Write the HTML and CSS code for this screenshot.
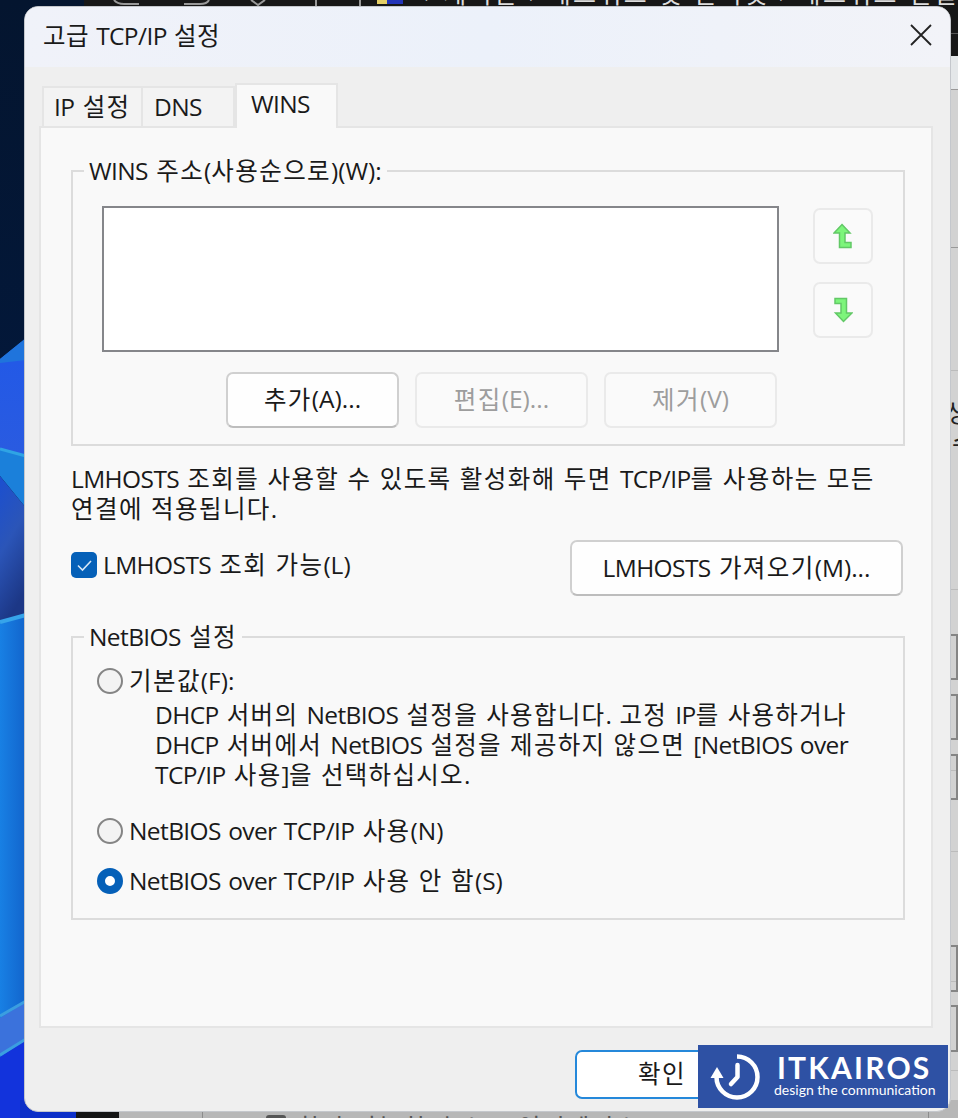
FILE: index.html
```html
<!DOCTYPE html>
<html lang="ko">
<head>
  <meta charset="UTF-8" />
  <meta name="viewport" content="width=device-width, initial-scale=1.0"/>
  <title>고급 TCP/IP 설정</title>
  <link rel="stylesheet" href="styles.css">
</head>
<body>

  <!-- wallpaper and the window behind -->
  <svg class="desktop" viewBox="0 0 958 1118" aria-hidden="true">
    <defs>
      <linearGradient id="night" x1="0" y1="0" x2="0" y2="1"><stop offset="0" stop-color="#04152f"/><stop offset="0.6" stop-color="#021a42"/><stop offset="1" stop-color="#032049"/></linearGradient>
      <linearGradient id="petal1" x1="0" y1="0" x2="0" y2="1"><stop offset="0" stop-color="#2277e0"/><stop offset="0.2" stop-color="#2359e6"/><stop offset="1" stop-color="#2a5be0"/></linearGradient>
      <linearGradient id="petal2" x1="0" y1="0" x2="0.3" y2="1"><stop offset="0" stop-color="#1b4fd0"/><stop offset="0.5" stop-color="#2b55b8"/><stop offset="1" stop-color="#1c3786"/></linearGradient>
      <linearGradient id="petal3" x1="0" y1="0" x2="1" y2="0"><stop offset="0" stop-color="#1880e4"/><stop offset="1" stop-color="#1264cc"/></linearGradient>
    </defs>
    <rect width="958" height="1118" fill="url(#night)"/>
    <path d="M0 359L26 338V460H0z" fill="url(#petal1)"/>
    <path d="M0 359L26 338V360L0 363z" fill="#1f74dc"/>
    <path d="M0 450L26 456V508L0 476z" fill="#1b80da"/>
    <path d="M0 476L26 508V620H0z" fill="url(#petal2)"/>
    <path d="M0 449L26 456" stroke="#2fa4e4" stroke-width="3"/>
    <path d="M0 622L26 615V1118H0z" fill="url(#petal3)"/>
    <path d="M0 622L26 615" stroke="#36a4ea" stroke-width="4"/>
    <path d="M0 1057L26 1040V1118H0z" fill="#1233dc"/>
    <path d="M0 1018L26 1002V1040L0 1056z" fill="#3b72dc"/>
    <path d="M0 1016L26 1001M0 1055L26 1039" stroke="#3b9ee0" stroke-width="3"/>
    <rect x="20" y="1100" width="58" height="18" fill="#0c2fc8"/>
    <rect x="84" width="874" height="56" fill="#171717"/>
    <rect x="940" y="33" width="18" height="1" fill="#555"/>
    <path d="M114 0Q117 4 124 4H139M184 4H200Q207 4 209 0M251 0L258 5L265 0M316 0V6M360 0V6" stroke="#999" stroke-width="2" fill="none"/>
    <rect x="377" y="0" width="10" height="4" fill="#e5cf66"/>
    <rect x="387" y="0" width="16" height="4" fill="#2334b8"/>
    <text x="424" y="3" class="crumb" textLength="534">› 제어판 › 네트워크 및 인터넷 › 네트워크 연결</text>
    <rect x="940" y="56" width="18" height="1062" fill="#d2d2d2"/>
    <rect x="940" y="56" width="18" height="33" fill="#e4e7e9"/>
    <path d="M940 89.500H958M940 247.500H958" stroke="#999"/>
    <path d="M940 370.500H958M940 589.500H958M940 770.500H958M940 851.500H958M940 981.500H958M940 1070.500H958" stroke="#bbb"/>
    <path d="M940 635H957V679H940M940 695H957V739H940M940 755H957V799H940M940 946H957V991H940M940 1006H957V1051H940" class="box"/>
    <text x="946" y="422" class="behind">생</text>
    <text x="952" y="452" class="behind">수</text>
    <rect x="76" y="1100" width="43" height="18" fill="#141414"/>
    <rect x="119" y="1100" width="839" height="18" fill="#b7b7b7"/>
    <path d="M202.500 1108V1118M928.500 1108V1118" stroke="#8c8c8c"/>
    <rect x="266" y="1115" width="20" height="10" rx="3" fill="#555"/>
    <text x="297" y="1137" class="behind faint">확장 가능한 호스트 인터페이스</text>
  </svg>

  <div class="dialog">
    <div class="titlebar">
      <div class="title">고급 <span class="en">TCP/IP</span> 설정</div>
      <svg class="close" width="22" height="22" viewBox="0 0 22 22"><path d="M1 1L21 21M21 1L1 21" stroke="#222" stroke-width="1.800" fill="none"/></svg>
    </div>

    <div class="tabs">
      <div class="tab tab-ip"><span class="en">IP</span> 설정</div>
      <div class="tab tab-dns"><span class="en">DNS</span></div>
      <div class="tab active"><span class="en">WINS</span></div>
    </div>

    <div class="panel">
      <div class="group wins">
        <div class="legend"><span class="en">WINS</span> 주소<span class="en mark">(</span>사용순으로<span class="en mark">)(W):</span></div>
        <div class="list-row">
          <div class="list"></div>
          <div class="arrows">
            <div class="btn small disabled">
              <svg width="20" height="26" viewBox="0 0 20 26"><path d="M9 1.500L17 10H12V19.500H18V24.500H6.500V10H1z" fill="#7df57b" stroke="#62c866" stroke-width="1.500"/></svg>
            </div>
            <div class="btn small disabled">
              <svg width="20" height="26" viewBox="0 0 20 26"><path d="M2 1.500H13.500V16H19L10.500 24.500L2.500 16H8V6.500H2z" fill="#7df57b" stroke="#62c866" stroke-width="1.500"/></svg>
            </div>
          </div>
        </div>
        <div class="actions">
          <div class="btn">추가<span class="en mark">(A)...</span></div>
          <div class="btn disabled">편집<span class="en mark">(E)...</span></div>
          <div class="btn disabled">제거<span class="en mark">(V)</span></div>
        </div>
      </div>

      <div class="note">
        <div><span class="en">LMHOSTS</span> 조회를 사용할 수 있도록 활성화해 두면 <span class="en">TCP/IP</span>를 사용하는 모든</div>
        <div>연결에 적용됩니다<span class="en">.</span></div>
      </div>

      <div class="lmhosts">
        <div class="option">
          <svg width="26" height="26" viewBox="0 0 26 26"><rect width="26" height="26" rx="5" fill="#0560b8"/><path d="M7 13.500L11.500 18L20 9" stroke="#d5e6f6" stroke-width="1.600" fill="none"/></svg>
          <span><span class="en">LMHOSTS</span> 조회 가능<span class="en mark">(L)</span></span>
        </div>
        <div class="btn import"><span><span class="en">LMHOSTS</span> 가져오기<span class="en mark">(M)...</span></span></div>
      </div>

      <div class="group netbios">
        <div class="legend"><span class="en">NetBIOS</span> 설정</div>
        <div class="option">
          <span class="radio"></span>
          <span>기본값<span class="en mark">(F):</span></span>
        </div>
        <div class="desc">
          <div><span class="en">DHCP</span> 서버의 <span class="en">NetBIOS</span> 설정을 사용합니다<span class="en">.</span> 고정 <span class="en">IP</span>를 사용하거나</div>
          <div><span class="en">DHCP</span> 서버에서 <span class="en">NetBIOS</span> 설정을 제공하지 않으면 <span class="en">[NetBIOS over</span></div>
          <div><span class="en">TCP/IP</span> 사용<span class="en">]</span>을 선택하십시오<span class="en">.</span></div>
        </div>
        <div class="option use">
          <span class="radio"></span>
          <span><span class="en">NetBIOS over TCP/IP</span> 사용<span class="en mark">(N)</span></span>
        </div>
        <div class="option">
          <span class="radio checked"></span>
          <span><span class="en">NetBIOS over TCP/IP</span> 사용 안 함<span class="en mark">(S)</span></span>
        </div>
      </div>
    </div>

    <div class="footer">
      <div class="btn ok">확인</div>
    </div>
  </div>

  <div class="watermark">
    <svg width="52" height="50" viewBox="0 0 52 50"><g fill="none" stroke="#fff" stroke-width="4.500"><path d="M27 4.500A20.500 20.500 0 1 1 6.500 25"/><path d="M27.500 13V25L21 32" stroke-linecap="round" stroke-linejoin="round"/></g><path d="M7 15L13.500 26H0.500z" fill="#fff"/></svg>
    <div class="brand">
      <div class="name">ITKAIROS</div>
      <div class="tagline">design the communication</div>
    </div>
  </div>

</body>
</html>
```
FILE: styles.css
```css
* {
  box-sizing: border-box;
}
body {
  margin: 0;
  width: 958px;
  height: 1118px;
  overflow: hidden;
  position: relative;
  font-family: "Noto Sans CJK KR", sans-serif;
  font-size: 24.5px;
  letter-spacing: 1.4px;
  line-height: 30px;
  color: #1a1a1a;
  white-space: nowrap;
}
.en {
  font-family: "Open Sans", sans-serif;
  font-size: 24.5px;
  letter-spacing: -0.6px;
  word-spacing: 1.5px;
  line-height: 0;
}
.en.mark {
  letter-spacing: 0;
}
.desktop {
  position: absolute;
  left: 0;
  top: 0;
  width: 958px;
  height: 1118px;
}
.crumb {
  font-size: 25px;
  fill: #ddd;
}
.behind {
  font-size: 25px;
  fill: #222;
}
.faint {
  fill: #555;
}
.box {
  fill: none;
  stroke: #858585;
  stroke-width: 2;
}
.dialog {
  position: relative;
  width: 927px;
  height: 1106px;
  margin: 6px 0 0 24px;
  background: #efefef;
  border: 1px solid #c4c7cc;
  border-radius: 14px;
  overflow: hidden;
}
.titlebar {
  display: flex;
  justify-content: space-between;
  height: 60px;
  padding: 13px 18px 0;
  background: linear-gradient(90deg, #f0f2f9, #ecf1fa 50%, #f2f3f8);
}
.title {
  letter-spacing: 0.4px;
}
.close {
  margin-top: 4px;
}
.tabs {
  display: flex;
  align-items: flex-end;
  height: 59px;
  padding-left: 17px;
}
.tab {
  height: 40px;
  padding: 3px 0 0 10px;
  background: #f3f3f3;
  border: 2px solid #e5e5e5;
  border-bottom: 0;
}
.tab-ip {
  width: 101px;
}
.tab-dns {
  width: 92px;
  padding-left: 11px;
  border-left: 0;
}
.tab.active {
  position: relative;
  z-index: 1;
  width: 103px;
  height: 45px;
  margin-bottom: -2px;
  padding: 3px 0 0 14px;
  background: #f9f9f9;
}
.panel {
  width: 894px;
  height: 902px;
  margin-left: 14px;
  padding: 42px 26px 0 30px;
  background: #f9f9f9;
  border: 2px solid #e5e5e5;
}
.group {
  width: 834px;
  border: 2px solid #dcdcdc;
}
.wins {
  height: 276px;
}
.legend {
  width: fit-content;
  height: 30px;
  margin: -17px 0 0 11px;
  padding: 0 5px;
  background: #f9f9f9;
}
.list-row {
  display: flex;
  gap: 34px;
  margin: 21px 0 0 29px;
}
.list {
  width: 677px;
  height: 146px;
  background: #fff;
  border: 2px solid #85868a;
}
.arrows {
  display: flex;
  flex-direction: column;
  gap: 18px;
  padding-top: 2px;
}
.btn {
  display: flex;
  align-items: center;
  justify-content: center;
  width: 173px;
  height: 56px;
  padding-bottom: 3px;
  background: #fefefe;
  border: 2px solid #d0d0d0;
  border-bottom-color: #bdbdbd;
  border-radius: 7px;
}
.btn.disabled {
  color: #9d9d9d;
  background: #fafafa;
  border-color: #eaeaea;
}
.btn.small {
  width: 60px;
  height: 56px;
  padding-bottom: 0;
}
.actions {
  display: flex;
  gap: 16px;
  margin: 20px 0 0 153px;
}
.note {
  margin-top: 17px;
}
.lmhosts {
  display: flex;
  justify-content: space-between;
  width: 832px;
  margin-top: 17px;
}
.lmhosts .option {
  height: 50px;
}
.option {
  display: flex;
  align-items: center;
  gap: 6px;
  height: 30px;
}
.option > span:last-child {
  padding-bottom: 2px;
}
.btn.import {
  width: 333px;
}
.netbios {
  height: 284px;
  margin-top: 40px;
}
.netbios .option {
  margin: 15px 0 0 24px;
}
.radio {
  width: 26px;
  height: 26px;
  background: #f3f3f3;
  border: 2px solid #858585;
  border-radius: 50%;
}
.radio.checked {
  background: #fff;
  border: 8px solid #0560b8;
}
.desc {
  margin: 3px 0 0 82px;
  letter-spacing: 1.3px;
}
.netbios .use {
  margin-top: 27px;
  margin-bottom: 20px;
}
.netbios .use + .option {
  margin-top: 0;
}
.footer {
  display: flex;
  padding: 22px 0 0 550px;
}
.btn.ok {
  width: 174px;
  height: 49px;
  background: #fff;
  border: 2px solid #2588da;
}
.watermark {
  position: absolute;
  left: 698px;
  top: 1045px;
  display: flex;
  width: 250px;
  height: 63px;
  padding: 7px 0 0 12px;
  background: #2e51a4;
  color: #fff;
}
.brand {
  padding-left: 12px;
  font-family: "Lato", sans-serif;
}
.name {
  height: 29px;
  padding-left: 3px;
  font-size: 30px;
  font-weight: 700;
  letter-spacing: 2.2px;
}
.tagline {
  font-size: 14px;
  line-height: 18px;
  letter-spacing: 0;
}
```
